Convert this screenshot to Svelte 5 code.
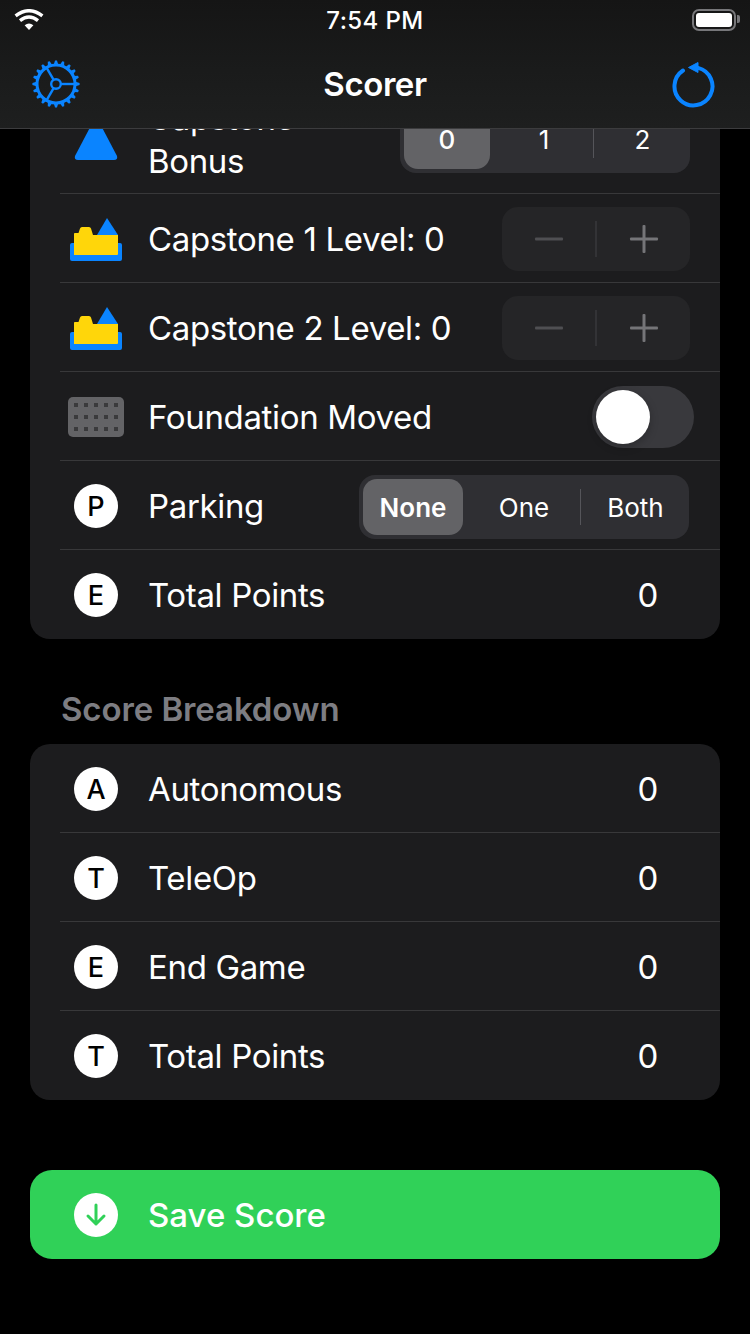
<script lang="ts">
  const teeth = Array.from({ length: 20 }, (_, i) => i * 18);
  const spokes = [0, 120, 240];
  const dotX = [8, 18, 28, 38, 48];
  const dotY = [8, 20, 32];

  const breakdown = [
    { letter: 'A', label: 'Autonomous', value: 0 },
    { letter: 'T', label: 'TeleOp', value: 0 },
    { letter: 'E', label: 'End Game', value: 0 },
    { letter: 'T', label: 'Total Points', value: 0 }
  ];
</script>

{#snippet capstone()}
  <svg class="cap-icon" width="52" height="43" viewBox="0 0 52 43">
    <rect y="25" width="52" height="18" rx="2" fill="#0a84ff" />
    <path d="M4 37V15.5Q4 15 5 15H8.5L10 10.5Q10.5 9 12 9H19Q20.5 9 21 10.5L23 17H48V36Q48 37 47 37Z" fill="#ffd60a" />
    <path d="M37 0L48 17H27Z" fill="#0a84ff" />
  </svg>
{/snippet}

{#snippet stepper()}
  <div class="stepper">
    <span class="minus"></span>
    <span class="step-div"></span>
    <span class="plus"></span>
  </div>
{/snippet}

<div class="page">
  <header class="top">
    <div class="status">
      <svg width="30" height="22" viewBox="0 0 30 22" class="wifi">
        <path d="M15 21L10.6 16.2Q15 12.8 19.4 16.2Z" fill="#fff" />
        <path d="M6 11.6Q15 4.4 24 11.6" fill="none" stroke="#fff" stroke-width="3.4" />
        <path d="M1.6 6.8Q15 -3.4 28.4 6.8" fill="none" stroke="#fff" stroke-width="3.4" />
      </svg>
      <span class="time">7:54 PM</span>
      <div class="battery"><span class="charge"></span><span class="nub"></span></div>
    </div>
    <nav class="bar">
      <svg class="gear" width="50" height="50" viewBox="-25 -25 50 50">
        {#each teeth as a}
          <path d="M-2.200 -19.500L-1 -23.600H1L2.200 -19.500Z" fill="#0a84ff" transform="rotate({a})" />
        {/each}
        <circle r="19" fill="none" stroke="#0a84ff" stroke-width="3" />
        {#each spokes as a}
          <line x1="5" x2="19" stroke="#0a84ff" stroke-width="2.400" transform="rotate({a})" />
        {/each}
        <circle r="4.800" fill="none" stroke="#0a84ff" stroke-width="2.400" />
      </svg>
      <h1>Scorer</h1>
      <svg class="reset" width="46" height="50" viewBox="0 0 46 50">
        <path d="M13 9.500A19 19 0 1 0 28 6.900" fill="none" stroke="#0a84ff" stroke-width="4" stroke-linecap="round" />
        <path d="M18.500 6.500L28 1.500V11.500Z" fill="#0a84ff" stroke="#0a84ff" stroke-width="1" stroke-linejoin="round" />
      </svg>
    </nav>
  </header>

  <main>
    <section class="card">
      <div class="row first">
        <span class="icon">
          <svg width="44" height="50" viewBox="0 0 44 50">
            <path d="M22 0L43 40Q44 44 40 44H4Q0 44 1 40Z" fill="#0a84ff" />
          </svg>
        </span>
        <span class="label two">Capstone Bonus</span>
        <div class="seg bonus">
          <span class="opt on">0</span>
          <span class="opt">1</span>
          <span class="seg-div"></span>
          <span class="opt">2</span>
        </div>
      </div>
      <div class="row">
        <span class="icon">{@render capstone()}</span>
        <span class="label">Capstone 1 Level: 0</span>
        {@render stepper()}
      </div>
      <div class="row">
        <span class="icon">{@render capstone()}</span>
        <span class="label">Capstone 2 Level: 0</span>
        {@render stepper()}
      </div>
      <div class="row">
        <span class="icon">
          <svg width="56" height="40" viewBox="0 0 56 40">
            <rect width="56" height="40" rx="5" fill="#636366" />
            {#each dotY as y}
              {#each dotX as x}
                <rect x={x - 2} y={y - 2} width="4" height="4" fill="#3a3a3c" />
              {/each}
            {/each}
          </svg>
        </span>
        <span class="label">Foundation Moved</span>
        <div class="toggle"><span class="knob"></span></div>
      </div>
      <div class="row">
        <span class="icon"><span class="badge">P</span></span>
        <span class="label">Parking</span>
        <div class="seg parking">
          <span class="opt on">None</span>
          <span class="opt">One</span>
          <span class="seg-div"></span>
          <span class="opt">Both</span>
        </div>
      </div>
      <div class="row">
        <span class="icon"><span class="badge">E</span></span>
        <span class="label">Total Points</span>
        <span class="value">0</span>
      </div>
    </section>

    <h2>Score Breakdown</h2>

    <section class="card">
      {#each breakdown as item}
        <div class="row">
          <span class="icon"><span class="badge">{item.letter}</span></span>
          <span class="label">{item.label}</span>
          <span class="value">{item.value}</span>
        </div>
      {/each}
    </section>

    <button type="button" class="save">
      <span class="icon">
        <span class="badge">
          <svg width="24" height="26" viewBox="0 0 24 26">
            <path d="M12 3V22M4 14L12 22L20 14" fill="none" stroke="#30d158" stroke-width="3" stroke-linecap="round" stroke-linejoin="round" />
          </svg>
        </span>
      </span>
      <span>Save Score</span>
    </button>
  </main>
</div>

<style>
  :global(body) {
    margin: 0;
    background: #000;
  }

  .page {
    position: relative;
    width: 750px;
    height: 1334px;
    overflow: hidden;
    background: #000;
    color: #fff;
    font-family: Inter, 'Liberation Sans', sans-serif;
  }

  .top {
    position: absolute;
    top: 0;
    left: 0;
    right: 0;
    height: 128px;
    z-index: 2;
    background: linear-gradient(180deg, #151515 0%, #1a1b1b 55%, #1e1f1f 100%);
    border-bottom: 1px solid #3c3c3e;
  }

  .status {
    height: 40px;
    position: relative;
  }

  .wifi {
    position: absolute;
    left: 14px;
    top: 9px;
  }

  .time {
    display: block;
    text-align: center;
    font-size: 24px;
    font-weight: 500;
    line-height: 42px;
    letter-spacing: 0.4px;
  }

  .battery {
    position: absolute;
    left: 692px;
    top: 9px;
    width: 44px;
    height: 22px;
    box-sizing: border-box;
    border: 2px solid #77777a;
    border-radius: 7px;
    padding: 2px;
  }

  .charge {
    display: block;
    height: 100%;
    background: #fff;
    border-radius: 3px;
  }

  .nub {
    position: absolute;
    right: -6px;
    top: 4px;
    width: 3px;
    height: 8px;
    background: #77777a;
    border-radius: 0 2px 2px 0;
  }

  .bar {
    height: 88px;
    display: flex;
    align-items: center;
    justify-content: space-between;
    padding: 0 34px 0 31px;
    position: relative;
  }

  .bar h1 {
    position: absolute;
    left: 0;
    right: 0;
    margin: 0;
    top: 23px;
    text-align: center;
    font-size: 33px;
    line-height: 42px;
    font-weight: 600;
    letter-spacing: -0.4px;
  }

  .reset {
    margin-top: 3px;
  }

  main {
    padding: 88px 30px 0;
  }

  .card {
    background: #1c1c1e;
    border-radius: 20px;
    overflow: hidden;
  }

  .row {
    display: flex;
    align-items: center;
    height: 86px;
    padding-top: 2px;
    margin-left: 30px;
    padding-right: 30px;
    border-bottom: 1px solid #38383a;
  }

  .row:last-child {
    border-bottom: 0;
    height: 88px;
    padding-top: 1px;
  }

  .row.first {
    height: 103px;
    padding-top: 0;
    padding-bottom: 2px;
  }

  .icon {
    flex: none;
    width: 72px;
    display: flex;
    align-items: center;
    justify-content: center;
  }

  .icon svg {
    display: block;
  }

  .row.first .icon {
    margin-top: 2px;
  }

  .badge {
    width: 44px;
    height: 44px;
    border-radius: 50%;
    background: #fff;
    color: #000;
    font-size: 27px;
    font-weight: 500;
    display: flex;
    align-items: center;
    justify-content: center;
  }

  .label {
    flex: 1;
    margin-left: 16px;
    font-size: 33px;
    line-height: 43px;
    letter-spacing: -0.35px;
    min-width: 0;
  }

  .label.two {
    flex: none;
    width: 200px;
  }

  .value {
    font-size: 33px;
    width: 44px;
    margin-right: 20px;
    text-align: center;
  }

  .seg {
    background: #2f2f33;
    display: flex;
    align-items: center;
    position: relative;
    margin-left: auto;
    box-sizing: border-box;
    padding: 4px;
    font-size: 26px;
  }

  .bonus {
    width: 290px;
    height: 66px;
    border-radius: 16px;
  }

  .parking {
    width: 330px;
    height: 64px;
    border-radius: 16px;
    margin-right: 1px;
    margin-top: 2px;
  }

  .opt {
    display: flex;
    align-items: center;
    justify-content: center;
    height: 100%;
    flex: 1;
    box-sizing: border-box;
    padding-left: 5px;
  }

  .opt.on {
    flex: none;
    padding-left: 0;
    background: #636366;
    border-radius: 14px;
    font-weight: 500;
  }

  .bonus .opt.on {
    width: 86px;
  }

  .parking .opt.on {
    width: 100px;
    font-weight: 600;
  }

  .bonus .opt:nth-child(2) {
    flex: none;
    width: 103px;
  }

  .parking .opt:nth-child(2) {
    flex: none;
    width: 117px;
  }

  .seg-div {
    flex: none;
    width: 1px;
    height: 36px;
    background: #55555a;
  }

  .stepper {
    width: 188px;
    height: 64px;
    background: #252527;
    border-radius: 16px;
    display: flex;
    align-items: center;
    position: relative;
    margin-left: auto;
  }

  .minus,
  .plus {
    flex: 1;
    height: 28px;
    position: relative;
  }

  .minus::before,
  .plus::before,
  .plus::after {
    content: '';
    position: absolute;
    left: 50%;
    top: 50%;
    width: 28px;
    height: 3px;
    transform: translate(-50%, -50%);
    border-radius: 1px;
  }

  .minus::before {
    background: #4f4f52;
  }

  .plus::before {
    background: #757578;
  }

  .plus::after {
    width: 3px;
    height: 28px;
    background: #757578;
  }

  .step-div {
    flex: none;
    width: 2px;
    height: 36px;
    background: #333336;
  }

  .toggle {
    margin-left: auto;
    margin-right: -4px;
    width: 102px;
    height: 62px;
    border-radius: 31px;
    background: #39393d;
    box-sizing: border-box;
    padding: 4px;
  }

  .knob {
    display: block;
    width: 54px;
    height: 54px;
    border-radius: 50%;
    background: #fff;
    box-shadow: 0 3px 8px rgba(0, 0, 0, 0.25);
  }

  h2 {
    margin: 0;
    height: 105px;
    padding: 50px 0 0 31px;
    box-sizing: border-box;
    font-size: 33px;
    line-height: 40px;
    font-weight: 600;
    letter-spacing: -0.1px;
    color: #7d7d82;
  }

  .save {
    width: 690px;
    height: 89px;
    margin-top: 70px;
    padding: 0 0 0 30px;
    border: 0;
    border-radius: 22px;
    background: #30d158;
    color: #fff;
    font: inherit;
    font-size: 33px;
    font-weight: 500;
    letter-spacing: 0;
    display: flex;
    align-items: center;
    text-align: left;
  }

  .save > span:last-child {
    margin-left: 16px;
  }
</style>
